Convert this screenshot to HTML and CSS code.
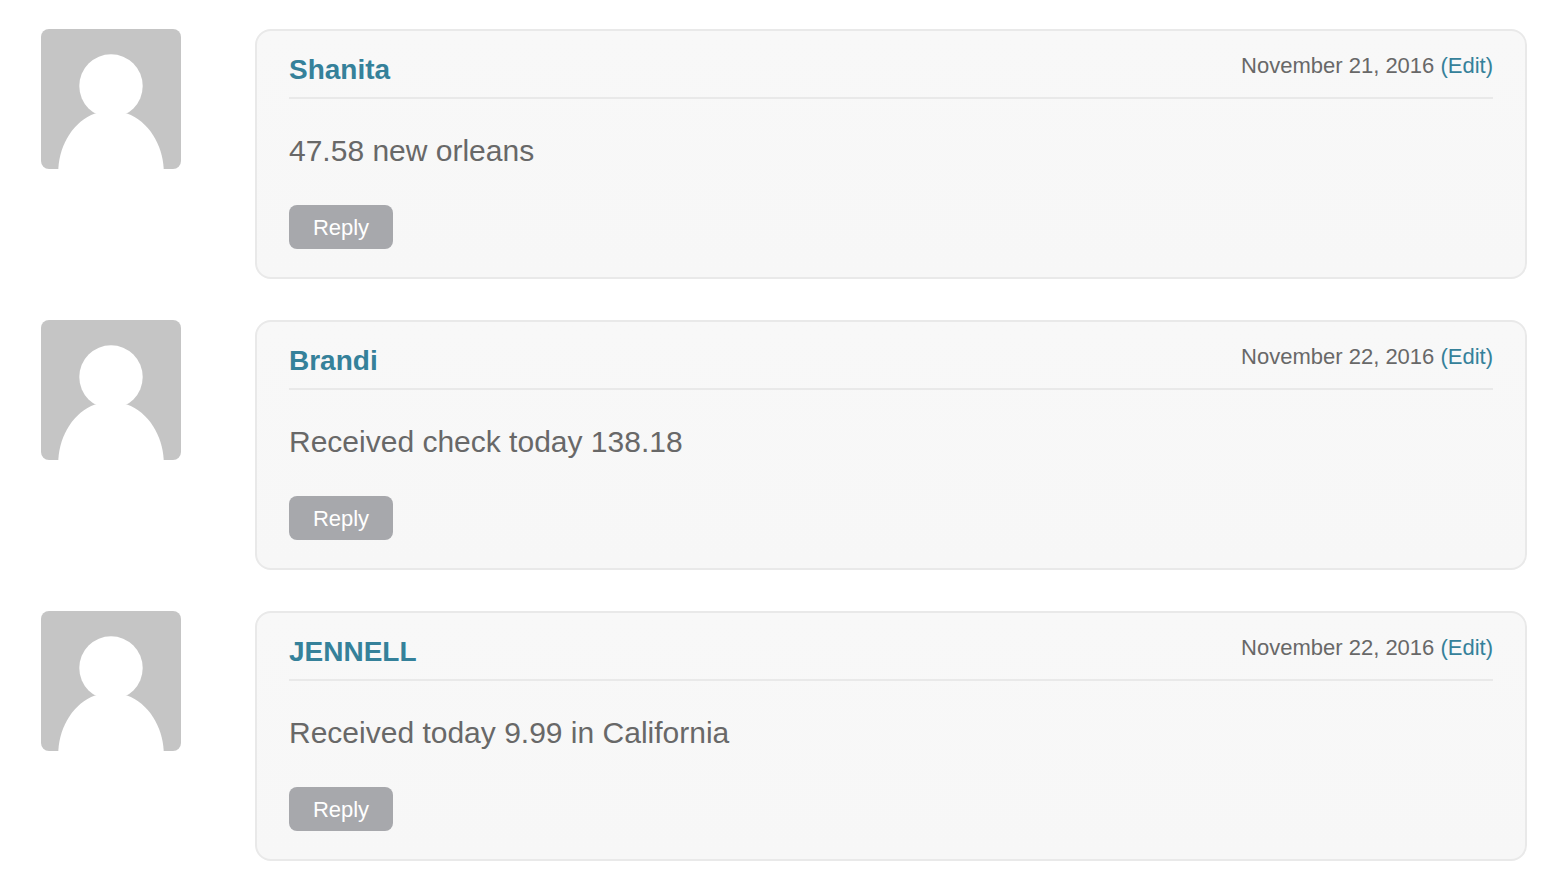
FILE: index.html
```html
<!DOCTYPE html>
<html lang="en">
<head>
<meta charset="UTF-8">
<title>Comments</title>
<link rel="stylesheet" href="styles.css">
</head>
<body>
<svg class="sprite" aria-hidden="true">
  <symbol id="avatar" viewBox="0 0 140 140">
    <rect width="140" height="140" fill="#c5c5c5"/>
    <circle cx="70" cy="57" r="31.7" fill="#fff"/>
    <path fill="#fff" d="M17.3 140C18.5 115 33 92 54 84.5H86C107 92 121.5 115 122.7 140Z"/>
  </symbol>
</svg>
<ol class="comment-list">
  <li class="comment">
    <svg class="avatar" aria-hidden="true"><use href="#avatar"/></svg>
    <article class="comment-body">
      <header class="comment-meta">
        <cite class="comment-author">Shanita</cite>
        <div class="comment-date">November 21, 2016 <a href="#edit-1">(Edit)</a></div>
      </header>
      <p class="comment-text">47.58 new orleans</p>
      <a class="reply" href="#reply-1">Reply</a>
    </article>
  </li>
  <li class="comment">
    <svg class="avatar" aria-hidden="true"><use href="#avatar"/></svg>
    <article class="comment-body">
      <header class="comment-meta">
        <cite class="comment-author">Brandi</cite>
        <div class="comment-date">November 22, 2016 <a href="#edit-2">(Edit)</a></div>
      </header>
      <p class="comment-text">Received check today 138.18</p>
      <a class="reply" href="#reply-2">Reply</a>
    </article>
  </li>
  <li class="comment">
    <svg class="avatar" aria-hidden="true"><use href="#avatar"/></svg>
    <article class="comment-body">
      <header class="comment-meta">
        <cite class="comment-author">JENNELL</cite>
        <div class="comment-date">November 22, 2016 <a href="#edit-3">(Edit)</a></div>
      </header>
      <p class="comment-text">Received today 9.99 in California</p>
      <a class="reply" href="#reply-3">Reply</a>
    </article>
  </li>
</ol>
</body>
</html>
```
FILE: styles.css
```css
* {
  box-sizing: border-box;
}
body {
  margin: 0;
  background: #fff;
  color: #686868;
  font-family: Arial, "Liberation Sans", sans-serif;
}
a {
  color: #35819a;
  text-decoration: none;
}
.sprite {
  display: none;
}
.comment-list {
  list-style: none;
  margin: 0;
  padding: 29px 31px 15px 41px;
}
.comment {
  display: flex;
  align-items: flex-start;
  gap: 74px;
  margin-bottom: 41px;
}
.comment:last-child {
  margin-bottom: 0;
}
.avatar {
  flex: none;
  width: 140px;
  height: 140px;
  border-radius: 8px;
}
.comment-body {
  flex: 1;
  padding: 21px 32px 28px;
  background: linear-gradient(#f8f8f8, #f7f7f7);
  border: 2px solid #e9e9e9;
  border-radius: 16px;
}
.comment-meta {
  display: flex;
  justify-content: space-between;
  align-items: flex-start;
  padding-bottom: 9px;
  border-bottom: 2px solid #e9e9e9;
}
.comment-author {
  color: #35819a;
  font-size: 28px;
  font-style: normal;
  font-weight: bold;
  line-height: 36px;
}
.comment-date {
  font-size: 22px;
  line-height: 28px;
}
.comment-text {
  margin: 32px 0 34px;
  font-size: 30px;
  line-height: 40px;
}
.reply {
  display: block;
  width: 104px;
  padding: 10px 0 8px;
  border-radius: 8px;
  background: #a7a8ac;
  color: #fff;
  font-size: 22px;
  line-height: 26px;
  text-align: center;
}
```
